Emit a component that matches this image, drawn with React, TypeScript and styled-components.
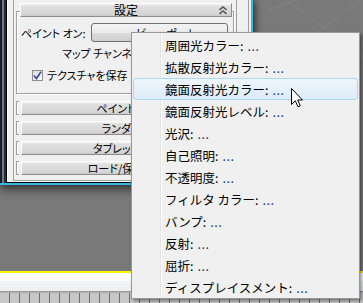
import React from 'react';
import styled, { createGlobalStyle } from 'styled-components';

const Global = createGlobalStyle`
  html, body { margin: 0; padding: 0; }
  body {
    width: 363px; height: 303px; overflow: hidden;
    background: #797979;
    font-family: "Noto Sans CJK JP", "Noto Sans", sans-serif;
  }
`;

const Screen = styled.div`
  position: relative;
  width: 363px;
  height: 303px;
  overflow: hidden;
  display: flex;
  flex-direction: column;
  background: #797979;
`;

const Viewport = styled.div`
  position: relative;
  height: 271px;
  display: flex;
  align-items: flex-start;
  background: #797979;
`;

const GridLines = styled.svg`
  position: absolute;
  left: 0;
  top: 0;
  width: 363px;
  height: 271px;
`;

const Panel = styled.div`
  position: relative;
  width: 253px;
  height: 185px;
  box-sizing: border-box;
  display: flex;
  border-right: 2px solid #35b9dc;
  border-bottom: 2px solid #35b9dc;
  box-shadow: 0 5px 9px rgba(0, 0, 0, 0.45), 3px 0 6px rgba(0, 0, 0, 0.35);
`;

const LeftStripes = styled.div`
  width: 6px;
  background: linear-gradient(to right, #171d28 0 2px, #6f7884 2px 4px, #232c3a 4px 6px);
`;

const Body = styled.div`
  flex: 1;
  display: flex;
  align-items: flex-start;
  background: #f0f0f0;
  border-left: 1px solid #000;
  border-bottom: 1px solid #000;
  box-shadow: inset 1px -1px 0 #fff;
  font-size: 11px;
  font-feature-settings: "palt";
  color: #000;
`;

const ScrollArea = styled.div`
  margin-left: 6px;
  width: 220px;
  height: 177px;
  border: 1px solid #a0a0a0;
  border-top: none;
  padding: 3px 0 0 2px;
  display: flex;
  flex-direction: column;
`;

const ScrollTrack = styled.div`
  width: 11px;
  height: 182px;
  border-right: 1px solid #a0a0a0;
`;

const GroupBox = styled.div`
  margin-top: 8px;
  width: 216px;
  border: 1px solid #a0a0a0;
  box-shadow: inset 1px 1px 0 #fff, 1px 1px 0 #fff;
  display: flex;
  flex-direction: column;
  padding-bottom: 7px;
`;

const TitleButton = styled.div<{ $expanded?: boolean }>`
  height: 14px;
  box-sizing: border-box;
  display: flex;
  align-items: center;
  justify-content: center;
  position: relative;
  background: linear-gradient(#f4f4f4 0, #e0e0e0 2px, #d4d4d4 11px, #c4c4c4 100%);
  border-top: 1px solid #fff;
  border-left: 1px solid #fff;
  border-right: 1px solid #8c8c8c;
  border-bottom: 1px solid #8c8c8c;
  font-size: ${(p) => (p.$expanded ? '12px' : '11px')};
  line-height: 12px;
  white-space: nowrap;
`;

const ExpandedTitle = styled(TitleButton)`
  margin-top: -9px;
  margin-left: 3px;
  width: 212px;
`;

const Chevron = styled.svg`
  position: absolute;
  right: 4px;
  top: 2px;
`;

const FormRow = styled.div<{ $indent: number; $h: number }>`
  display: flex;
  align-items: center;
  height: ${(p) => p.$h}px;
  padding-left: ${(p) => p.$indent}px;
  white-space: nowrap;
`;

const Dropdown = styled.div`
  margin-left: 5px;
  width: 137px;
  height: 19px;
  box-sizing: border-box;
  border: 1px solid #707070;
  border-radius: 3px;
  background: linear-gradient(#f3f3f3, #ebebeb 50%, #dddddd 50%, #cfcfcf);
  display: flex;
  align-items: center;
  justify-content: center;
  padding-left: 14px;
`;

const CheckBox = styled.div`
  width: 11px;
  height: 11px;
  box-sizing: border-box;
  border: 1px solid #8e8f8f;
  background: linear-gradient(135deg, #dcdcdc, #fbfbfb);
  margin-right: 4px;
  display: flex;
  align-items: center;
  justify-content: center;
`;

const CollapsedList = styled.div`
  margin-top: 7px;
  display: flex;
  flex-direction: column;
  gap: 6px;
`;

const CollapsedRow = styled.div`
  display: flex;
  align-items: center;
  height: 14px;
`;

const Bracket = styled.div`
  width: 2px;
  height: 12px;
  margin-right: 2px;
  border: 1px solid #a0a0a0;
  border-right: none;
  box-shadow: inset 1px 1px 0 #fff;
`;

const CollapsedTitle = styled(TitleButton)`
  width: 212px;
`;

const YellowLine = styled.div`
  height: 2px;
  background: #fff100;
`;

const TrackBar = styled.div`
  height: 18px;
  background: linear-gradient(#ffffff 0 7px, #f3f4f6 8px, #eceef1 100%);
  border-bottom: 1px solid #9a9a9a;
`;

const Ruler = styled.div`
  flex: 1;
  background: repeating-linear-gradient(to right, #c7c7c7 0 9px, #6c6c6c 9px 10px);
  border-top: 1px solid #b0b0b0;
`;

const Menu = styled.div`
  position: absolute;
  left: 131px;
  top: 32px;
  width: 229px;
  box-sizing: border-box;
  padding: 1px 1px 0;
  border: 1px solid #979797;
  background: linear-gradient(
      to right,
      transparent 28px,
      #e2e3e3 28px,
      #e2e3e3 29px,
      #ffffff 29px,
      #ffffff 30px,
      transparent 30px
    ),
    #f0f0f0;
  box-shadow: 2px 2px 3px rgba(0, 0, 0, 0.4);
  font-family: "Noto Sans CJK JP", sans-serif;
  font-size: 12.5px;
  color: #000;
  display: flex;
  flex-direction: column;
`;

const MenuItem = styled.div<{ $active?: boolean }>`
  height: 22px;
  box-sizing: border-box;
  display: flex;
  align-items: center;
  padding-left: ${(p) => (p.$active ? 31 : 32)}px;
  white-space: nowrap;
  border-radius: 3px;
  border: ${(p) => (p.$active ? '1px solid #a9d9f4' : 'none')};
  background: ${(p) => (p.$active ? 'linear-gradient(#eef6fd, #dcecf9)' : 'transparent')};
`;

const Dots = styled.span`
  color: #163c74;
  margin-left: 4px;
  letter-spacing: 0.5px;
`;

const Cursor = styled.svg`
  position: absolute;
  left: 291px;
  top: 88px;
`;

const menuItems = [
  '周囲光カラー',
  '拡散反射光カラー',
  '鏡面反射光カラー',
  '鏡面反射光レベル',
  '光沢',
  '自己照明',
  '不透明度',
  'フィルタ カラー',
  'バンプ',
  '反射',
  '屈折',
  'ディスプレイスメント',
];

const rollouts = ['ペイント設定', 'ランダム性', 'タブレット筆圧', 'ロード/保存設定'];

export default function App() {
  return (
    <Screen>
      <Global />
      <Viewport>
        <GridLines viewBox="0 0 363 271">
          <g stroke="#888" strokeWidth="1" fill="none" opacity="0.8">
            <line x1="284" y1="-2" x2="370" y2="62" />
            <line x1="366" y1="-4" x2="240" y2="90" />
            <line x1="268" y1="10" x2="302" y2="-2" />
          </g>
        </GridLines>
        <Panel>
          <LeftStripes />
          <Body>
            <ScrollArea>
              <GroupBox>
                <ExpandedTitle $expanded>
                  設定
                  <Chevron width="8" height="9" viewBox="0 0 8 9">
                    <path d="M0.5 4 L4 1 L7.5 4" stroke="#5a5a5a" strokeWidth="1.6" fill="none" />
                    <path d="M0.5 8 L4 5 L7.5 8" stroke="#5a5a5a" strokeWidth="1.6" fill="none" />
                  </Chevron>
                </ExpandedTitle>
                <FormRow $indent={4} $h={19} style={{ marginTop: 6 }}>
                  ペイント オン:
                  <Dropdown>ビューポート</Dropdown>
                </FormRow>
                <FormRow $indent={45} $h={22}>
                  マップ チャンネル:
                </FormRow>
                <FormRow $indent={15} $h={22}>
                  <CheckBox>
                    <svg width="9" height="9" viewBox="0 0 9 9">
                      <path d="M1 4.5 L3.5 7.5 L8 0.8" stroke="#3b4f96" strokeWidth="1.7" fill="none" />
                    </svg>
                  </CheckBox>
                  テクスチャを保存
                </FormRow>
              </GroupBox>
              <CollapsedList>
                {rollouts.map((r) => (
                  <CollapsedRow key={r}>
                    <Bracket />
                    <CollapsedTitle>{r}</CollapsedTitle>
                  </CollapsedRow>
                ))}
              </CollapsedList>
            </ScrollArea>
            <ScrollTrack />
          </Body>
        </Panel>
      </Viewport>
      <YellowLine />
      <TrackBar />
      <Ruler />
      <Menu>
        {menuItems.map((m, i) => (
          <MenuItem key={m} $active={i === 2}>
            {m}:<Dots>...</Dots>
          </MenuItem>
        ))}
      </Menu>
      <Cursor width="13" height="20" viewBox="0 0 13 20">
        <path
          d="M0.5 0.5 L0.5 16.5 L4.3 12.8 L7 18.8 L9.3 17.8 L6.7 12 L11.5 12 Z"
          fill="#fff"
          stroke="#000"
          strokeWidth="1"
        />
      </Cursor>
    </Screen>
  );
}
